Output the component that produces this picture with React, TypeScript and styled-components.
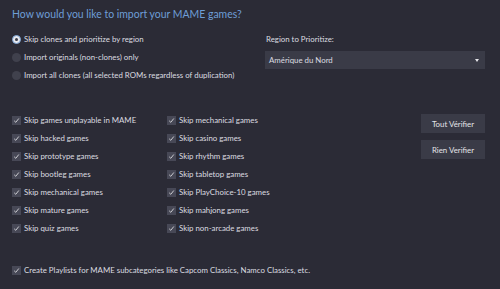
import React from 'react';
import styled, { createGlobalStyle } from 'styled-components';

const GlobalStyle = createGlobalStyle`
  html, body {
    margin: 0;
    padding: 0;
    background: #2b2b36;
  }
  body {
    font-family: Lato, 'Open Sans', Arial, sans-serif;
    color: #dcdce0;
  }
`;

const Page = styled.div`
  width: 500px;
  height: 289px;
  box-sizing: border-box;
  padding: 5px 12px 0 12px;
  background: #2b2b36;
  display: flex;
  flex-direction: column;
`;

const Title = styled.div`
  font-size: 10.45px;
  line-height: 18px;
  color: #6e9ed6;
`;

const TopRow = styled.div`
  display: flex;
  margin-top: 7px;
`;

const RadioList = styled.div`
  display: flex;
  flex-direction: column;
  width: 253px;
`;

const Row = styled.div`
  display: flex;
  align-items: center;
  height: 18px;
  font-size: 7.85px;
  gap: 3px;
  white-space: nowrap;
`;

const RadioDot = styled.span<{ $checked?: boolean }>`
  width: 9px;
  height: 9px;
  flex-shrink: 0;
  border-radius: 50%;
  box-sizing: border-box;
  background: ${(p) => (p.$checked ? '#e6e8ee' : '#40414d')};
  border: ${(p) => (p.$checked ? '1px solid #7aa3d6' : 'none')};
  display: flex;
  align-items: center;
  justify-content: center;
  &::after {
    content: '';
    display: ${(p) => (p.$checked ? 'block' : 'none')};
    width: 3px;
    height: 3px;
    border-radius: 50%;
    background: #3a3b47;
  }
`;

const RegionBox = styled.div`
  display: flex;
  flex-direction: column;
  padding-top: 3px;
`;

const RegionLabel = styled.div`
  font-size: 7.85px;
  line-height: 12px;
  margin-left: 1px;
`;

const Select = styled.div`
  margin-top: 6px;
  width: 220px;
  height: 18px;
  box-sizing: border-box;
  background: #3a3b47;
  display: flex;
  align-items: center;
  justify-content: space-between;
  padding: 0 6px 0 4px;
  font-size: 7.85px;
`;

const Caret = styled.span`
  width: 0;
  height: 0;
  border-left: 2.5px solid transparent;
  border-right: 2.5px solid transparent;
  border-top: 3px solid #e6e6ea;
`;

const Options = styled.div`
  display: flex;
  margin-top: 27px;
`;

const Column = styled.div<{ $width: number }>`
  display: flex;
  flex-direction: column;
  width: ${(p) => p.$width}px;
`;

const Box = styled.span`
  width: 9px;
  height: 9px;
  background: #474856;
  display: flex;
  align-items: center;
  justify-content: center;
  flex-shrink: 0;
`;

const Buttons = styled.div`
  display: flex;
  flex-direction: column;
  gap: 7px;
  margin-top: 3px;
`;

const Button = styled.button`
  width: 64px;
  height: 19px;
  border: none;
  background: #3a3b47;
  color: #e4e4e8;
  font-family: inherit;
  font-size: 7.85px;
  padding: 0;
  cursor: pointer;
`;

const Footer = styled.div`
  margin-top: 24px;
`;

function Check() {
  return (
    <Box>
      <svg width="7" height="7" viewBox="0 0 7 7">
        <path d="M1.2 3.8 L2.8 5.3 L5.8 1.5" fill="none" stroke="#d8d8dd" strokeWidth="0.9" />
      </svg>
    </Box>
  );
}

function CheckRow({ label }: { label: string }) {
  return (
    <Row>
      <Check />
      <span>{label}</span>
    </Row>
  );
}

const radios = [
  'Skip clones and prioritize by region',
  'Import originals (non-clones) only',
  'Import all clones (all selected ROMs regardless of duplication)',
];

const left = [
  'Skip games unplayable in MAME',
  'Skip hacked games',
  'Skip prototype games',
  'Skip bootleg games',
  'Skip mechanical games',
  'Skip mature games',
  'Skip quiz games',
];

const right = [
  'Skip mechanical games',
  'Skip casino games',
  'Skip rhythm games',
  'Skip tabletop games',
  'Skip PlayChoice-10 games',
  'Skip mahjong games',
  'Skip non-arcade games',
];

export default function App() {
  return (
    <>
      <GlobalStyle />
      <Page>
        <Title>How would you like to import your MAME games?</Title>
        <TopRow>
          <RadioList>
            {radios.map((r, i) => (
              <Row key={r}>
                <RadioDot $checked={i === 0} />
                <span>{r}</span>
              </Row>
            ))}
          </RadioList>
          <RegionBox>
            <RegionLabel>Region to Prioritize:</RegionLabel>
            <Select>
              <span>Amérique du Nord</span>
              <Caret />
            </Select>
          </RegionBox>
        </TopRow>
        <Options>
          <Column $width={155}>
            {left.map((l) => (
              <CheckRow key={l} label={l} />
            ))}
          </Column>
          <Column $width={254}>
            {right.map((l) => (
              <CheckRow key={l} label={l} />
            ))}
          </Column>
          <Buttons>
            <Button>Tout Vérifier</Button>
            <Button>Rien Verifier</Button>
          </Buttons>
        </Options>
        <Footer>
          <CheckRow label="Create Playlists for MAME subcategories like Capcom Classics, Namco Classics, etc." />
        </Footer>
      </Page>
    </>
  );
}
